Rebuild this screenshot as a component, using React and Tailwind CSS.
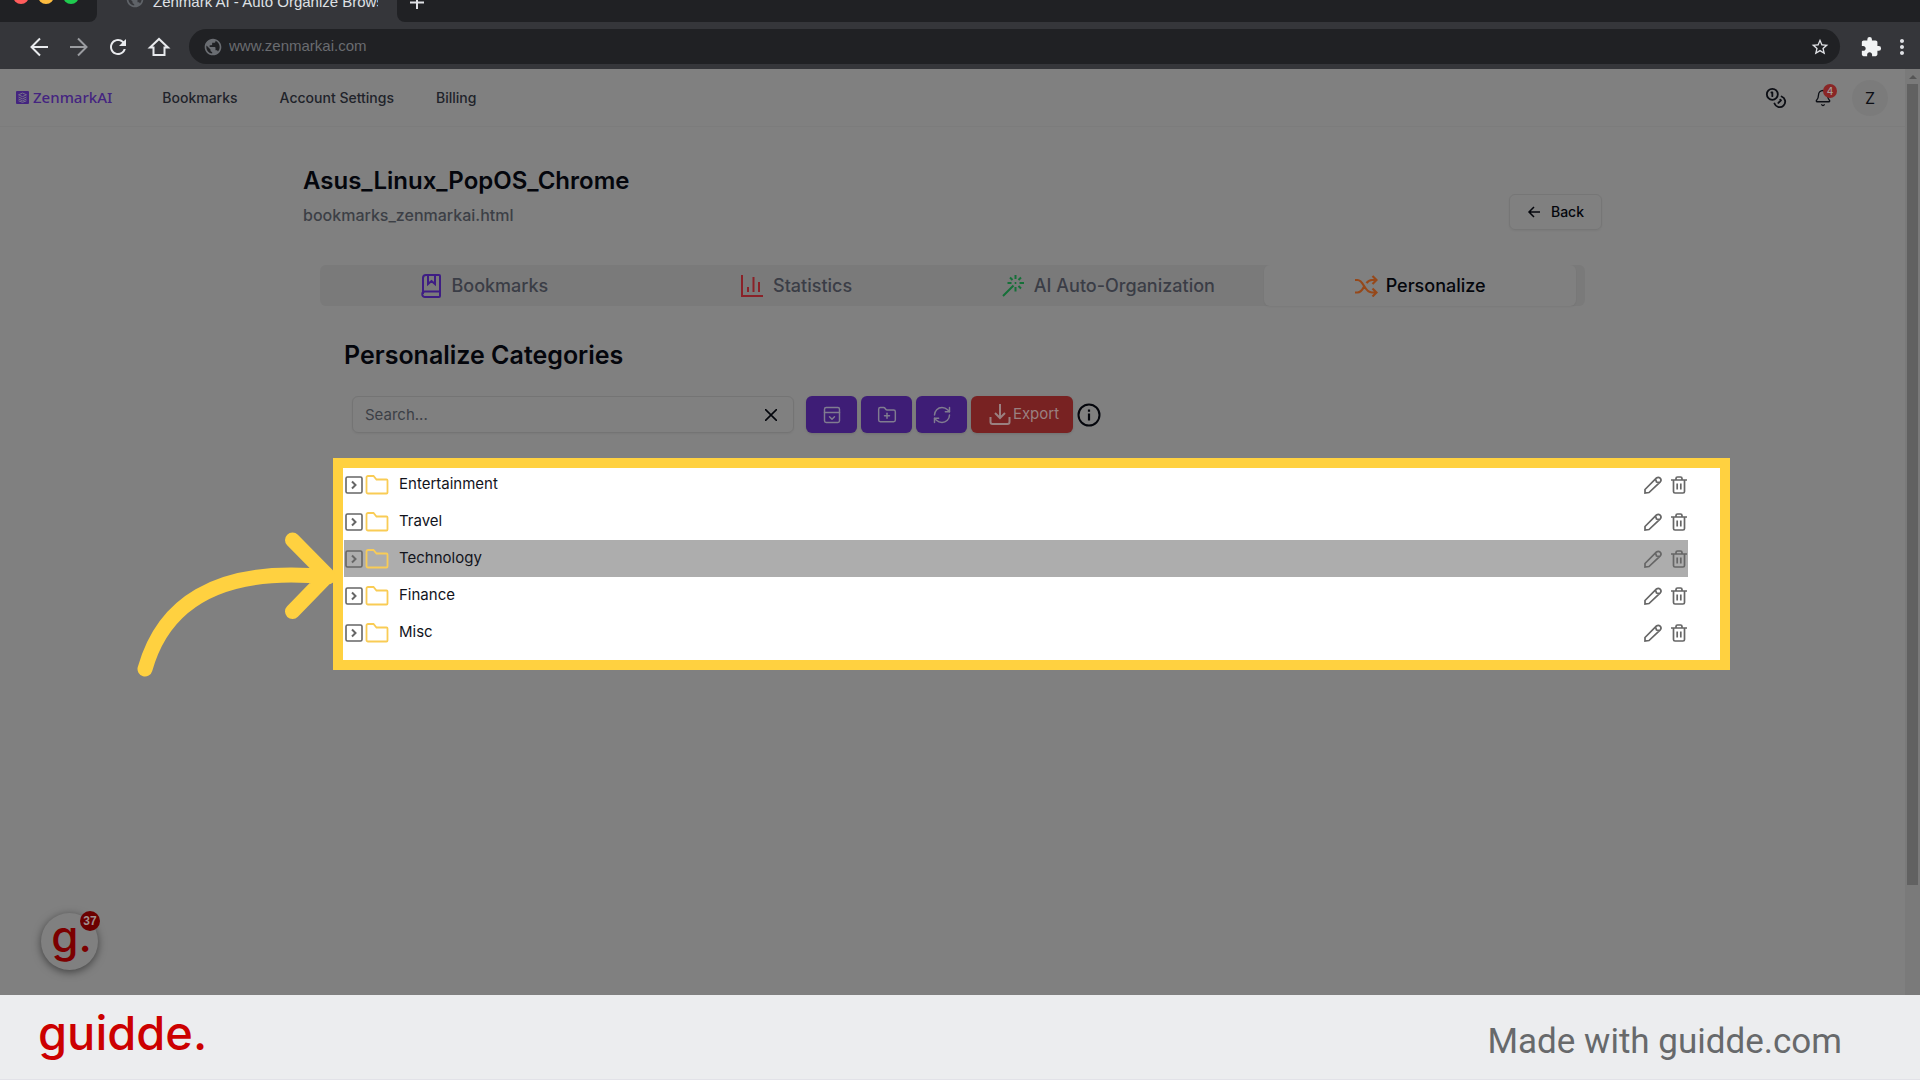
import { useState } from "react";
import {
  Bell,
  Coins,
  FolderPlus,
  PanelTopOpen,
  RefreshCw,
} from "lucide-react";
import {
  MdExtension,
  MdMoreVert,
  MdPublic,
  MdRefresh,
  MdStarOutline,
} from "react-icons/md";

const categories = ["Entertainment", "Travel", "Technology", "Finance", "Misc"];

function BookIcon() {
  return (
    <svg width="20" height="24" viewBox="0 0 20 24" fill="none" stroke="#3e1d84" strokeWidth="2">
      <path d="M2 20V4a3 3 0 0 1 3-3h13a1 1 0 0 1 1 1v20a1 1 0 0 1-1 1H4a2.500 2.500 0 0 1 0-5.500h15M7 1v9l3.500-3 3.500 3V1" />
    </svg>
  );
}

function ChartIcon() {
  return (
    <svg width="22" height="22" viewBox="0 0 22 22" fill="none" stroke="#8a2228" strokeWidth="2">
      <path d="M1 0v21H22M7 17v-5M12.500 17V2M18 17V7" />
    </svg>
  );
}

function WandIcon() {
  return (
    <svg width="22" height="22" viewBox="0 0 22 22" fill="none" stroke="#157038" strokeWidth="2">
      <path d="M1 21 11.500 10.500M13.500 0v4M13.500 12v4.500M5.500 8h4M17.500 8H22M8 2.500l2.500 2.500M19 2.500 16.500 5M16.500 11l2.500 2.500M12.700 8h1.600" />
    </svg>
  );
}

function ShuffleIcon() {
  return (
    <svg width="23" height="22" viewBox="0 0 23 22" fill="none" stroke="#96481a" strokeWidth="2.200">
      <path d="M0 5h2.500C9 5 9 17.500 17 17.500h4M0 17.500h2.500c4 0 5.500-4 7-6.800M11.500 8.200C13 6 14.500 5 17 5h4M17.500 1l4 4-4 4M17.500 13.500l4 4-4 4" />
    </svg>
  );
}

function DownloadIcon() {
  return (
    <svg width="22" height="22" viewBox="0 0 22 22" fill="none" stroke="currentColor" strokeWidth="2">
      <path d="M11 0v14M6 9l5 5 5-5M1.500 13v5a2 2 0 0 0 2 2h15a2 2 0 0 0 2-2V13" />
    </svg>
  );
}

function ExpandIcon() {
  return (
    <svg width="18" height="18" viewBox="0 0 18 18" fill="none" stroke="#666" strokeWidth="1.600">
      <rect x="1" y="1" width="16" height="16" rx="1.500" />
      <path d="m7 5.500 3.500 3.500L7 12.500" strokeWidth="2" />
    </svg>
  );
}

function FolderIcon() {
  return (
    <svg width="24" height="20" viewBox="0 0 24 20" fill="none" stroke="#f9cc55" strokeWidth="1.800">
      <path d="M1.500 17V2.500a1.500 1.500 0 0 1 1.500-1.500h5.500l3 3.500h10a1 1 0 0 1 1 1V17.500a1 1 0 0 1-1 1h-18.500a1.500 1.500 0 0 1-1.500-1.500z" />
    </svg>
  );
}

function PencilIcon() {
  return (
    <svg width="18" height="18" viewBox="0 0 18 18" fill="none" stroke="#666" strokeWidth="1.700">
      <path d="M1 17v-3.500L12.500 2a2.700 2.700 0 0 1 3.800 3.800L5 16.500zM11.500 3l1 3 3.200.5" />
    </svg>
  );
}

function TrashIcon() {
  return (
    <svg width="16" height="18" viewBox="0 0 16 18" fill="none" stroke="#666" strokeWidth="1.700">
      <path d="M0 4h16M2.500 4v11.500a1.500 1.500 0 0 0 1.500 1.500h8a1.500 1.500 0 0 0 1.500-1.500V4M5 4V2.500A1.500 1.500 0 0 1 6.500 1h3A1.500 1.500 0 0 1 11 2.500V4M6.200 7.500v6M9.800 7.500v6" />
    </svg>
  );
}

function BrowserBar() {
  return (
    <div className="bg-[#35363a] font-['Liberation_Sans']">
      {/* tab strip, scrolled half out of view */}
      <div className="flex h-[22px] overflow-hidden">
        <div className="flex w-[97px] items-start gap-[9px] rounded-br-lg bg-[#202124] pl-[13px]">
          <span className="-mt-3 size-4 rounded-full bg-[#ff5c5c]" />
          <span className="-mt-3 size-4 rounded-full bg-[#fdbc40]" />
          <span className="-mt-3 size-4 rounded-full bg-[#1fcb4f]" />
        </div>
        <div className="flex w-[300px] items-start gap-2 pl-7">
          <MdPublic className="-mt-[11px] size-5 shrink-0 text-[#5f6368]" />
          <span className="-mt-2 w-[225px] overflow-hidden text-[15px] leading-5 whitespace-nowrap text-[#dfe1e5]">
            Zenmark AI - Auto Organize Browser
          </span>
        </div>
        <div className="flex flex-1 items-start rounded-bl-lg bg-[#202124] pl-3">
          <svg className="-mt-1" width="16" height="16" viewBox="0 0 16 16" stroke="#dfe1e5" strokeWidth="2">
            <path d="M8 0v13M1 6.500h14" />
          </svg>
        </div>
      </div>
      <div className="flex h-[47px] items-center pt-0.5 pr-1.5 pl-[27px]">
        <button aria-label="Back">
          <svg width="24" height="24" viewBox="0 0 24 24" fill="none" stroke="#e8eaed" strokeWidth="2">
            <path d="M21 12H5M13 3.500 4.500 12l8.500 8.500" />
          </svg>
        </button>
        <button aria-label="Forward" className="ml-4">
          <svg width="24" height="24" viewBox="0 0 24 24" fill="none" stroke="#9a9ca0" strokeWidth="2">
            <path d="M3 12h16M11 3.500l8.500 8.500-8.500 8.500" />
          </svg>
        </button>
        <button aria-label="Reload" className="ml-[15px]"><MdRefresh className="size-6 text-[#e8eaed]" /></button>
        <button aria-label="Home" className="ml-[17px]">
          <svg width="24" height="24" viewBox="0 0 24 24" fill="none" stroke="#e8eaed" strokeWidth="2">
            <path d="M3 12.500h3.500V20h11v-7.500H21L12 4z" />
          </svg>
        </button>
        <div className="ml-[18px] flex h-[35px] flex-1 items-center rounded-full bg-[#202124] pr-2.5 pl-3.5">
          <MdPublic className="size-5 text-[#6a6d72]" />
          <input
            aria-label="Address"
            className="ml-1.5 flex-1 text-[15px] text-[#6a6c70] outline-none"
            defaultValue="www.zenmarkai.com"
          />
          <button aria-label="Bookmark this page"><MdStarOutline className="size-5 text-[#dfe1e5]" /></button>
        </div>
        <button aria-label="Extensions" className="ml-5"><MdExtension className="size-[22px] text-[#f1f3f4]" /></button>
        <button aria-label="Menu" className="ml-2"><MdMoreVert className="size-6 text-[#dfe1e5]" /></button>
      </div>
    </div>
  );
}

function Header() {
  return (
    <header className="flex h-[58px] items-center border-b border-[#7c7c7c] pr-[17px] pl-4 text-sm font-medium text-[#20232a]">
      <a href="#" className="flex items-center gap-1 pt-px font-['Noto_Sans'] text-[15px] font-medium text-[#442480]">
        <svg width="13" height="13" viewBox="0 0 13 13">
          <rect width="13" height="13" rx="1" fill="#442480" />
          <path d="m6.500 2 4 1.800-4 1.800-4-1.800zM2.500 6l4 1.800 4-1.800M2.500 8l4 1.800 4-1.800M2.500 9.800l4 1.500 4-1.500" fill="none" stroke="#77728a" />
        </svg>
        ZenmarkAI
      </a>
      <nav className="ml-[50px] flex gap-[42px] pt-px">
        <a href="#">Bookmarks</a>
        <a href="#">Account Settings</a>
        <a href="#">Billing</a>
      </nav>
      <div className="ml-auto flex items-center">
        <button aria-label="Credits"><Coins className="size-[22px] text-[#0c0e14]" /></button>
        <button aria-label="Notifications" className="relative ml-[27px]">
          <Bell className="size-[18px] text-[#0c0e14]" strokeWidth={1.75} />
          <span className="absolute -top-[5px] left-[9px] size-3.5 rounded-full bg-[#8a2626] text-center text-[10px] leading-3.5 text-[#a59a9a]">
            4
          </span>
        </button>
        <button className="ml-5 size-9 rounded-full bg-[#7b7b7b] text-base font-normal text-[#0c0e14]">Z</button>
      </div>
    </header>
  );
}

const tabs = [
  { name: "Bookmarks", icon: BookIcon },
  { name: "Statistics", icon: ChartIcon },
  { name: "AI Auto-Organization", icon: WandIcon },
  { name: "Personalize", icon: ShuffleIcon },
];

function Tabs() {
  const [active, setActive] = useState("Personalize");

  return (
    <div role="tablist" className="mx-[17px] mt-[35px] grid h-[41px] grid-cols-4 rounded-md bg-[#7a7a7a] px-[9px] text-lg font-medium">
      {tabs.map(({ name, icon: Icon }) => (
        <button
          key={name}
          role="tab"
          aria-selected={active === name}
          onClick={() => setActive(name)}
          className={
            active === name
              ? "flex items-center justify-center gap-2 rounded-md bg-[#808080] text-[#04060c] shadow-xs"
              : "flex items-center justify-center gap-2.5 rounded-md text-[#3a3d46]"
          }
        >
          <Icon />
          {name}
        </button>
      ))}
    </div>
  );
}

function Toolbar() {
  const [search, setSearch] = useState("");

  return (
    <div className="mt-[26px] ml-[49px] flex items-center">
      <div className="flex h-[37px] w-[442px] items-center rounded-md border border-[#747474] pr-4 pl-3 shadow-xs">
        <input
          aria-label="Search"
          className="flex-1 pt-px text-[15px] outline-none placeholder:text-[#3c3f46]"
          placeholder="Search..."
          value={search}
          onChange={(e) => setSearch(e.target.value)}
        />
        <button aria-label="Clear" onClick={() => setSearch("")}>
          <svg width="12" height="12" viewBox="0 0 12 12" stroke="#04060c" strokeWidth="1.600">
            <path d="m0 0 12 12M12 0 0 12" />
          </svg>
        </button>
      </div>
      <div className="ml-3 flex items-center gap-1 text-[#807c90]">
        <button aria-label="Collapse all" className="flex h-[37px] w-[51px] items-center justify-center rounded-md bg-[#3e1d76] shadow-sm">
          <PanelTopOpen className="size-5" strokeWidth={1.75} />
        </button>
        <button aria-label="New folder" className="flex h-[37px] w-[51px] items-center justify-center rounded-md bg-[#3e1d76] shadow-sm">
          <FolderPlus className="size-5" strokeWidth={1.75} />
        </button>
        <button aria-label="Refresh" className="flex h-[37px] w-[51px] items-center justify-center rounded-md bg-[#3e1d76] shadow-sm">
          <RefreshCw className="size-5" strokeWidth={1.75} />
        </button>
        <button className="flex h-[37px] w-[102px] items-center justify-center gap-0.5 rounded-md bg-[#782222] pl-1 text-[15px] text-[#9a8080] shadow-sm">
          <DownloadIcon />
          Export
        </button>
        <button aria-label="Info">
          <svg width="24" height="24" viewBox="0 0 24 24" fill="none" stroke="#04060c" strokeWidth="2">
            <circle cx="12" cy="12" r="10.500" />
            <path d="M12 10.500v7M12 6.500v2.200" strokeWidth="2.200" />
          </svg>
        </button>
      </div>
    </div>
  );
}

function CategoryList() {
  return (
    <div className="relative mt-[25px] -mr-[128px] ml-[30px] bg-white pt-2 pr-[42px] pb-[19px] pl-[11px]">
      <ul className="text-[15px] text-[#12141c]">
        {categories.map((name) => (
          <li
            key={name}
            className={
              name === "Technology"
                ? "flex h-[37px] items-center bg-[#adadad] pr-px pl-px"
                : "flex h-[37px] items-center pr-px pl-px"
            }
          >
            <button aria-label={"Expand " + name}><ExpandIcon /></button>
            <span className="ml-0.5"><FolderIcon /></span>
            <span className="ml-2.5 flex-1">{name}</span>
            <button aria-label={"Edit " + name}><PencilIcon /></button>
            <button aria-label={"Delete " + name} className="ml-[9px]"><TrashIcon /></button>
          </li>
        ))}
      </ul>
      <div className="pointer-events-none absolute inset-0 border-[10px] border-[#ffd140]" />
      <svg
        className="pointer-events-none absolute top-[67px] -left-[203px]"
        width="205"
        height="160"
        viewBox="130 525 205 160"
        fill="none"
        stroke="#ffd140"
        strokeWidth="15"
        strokeLinecap="round"
        strokeLinejoin="round"
      >
        <path d="M145 669C162 608 212 565 328 577M292.500 540l35 35.500-35 36" />
      </svg>
    </div>
  );
}

export default function App() {
  return (
    <div className="flex min-h-screen flex-col bg-[#808080] font-[Inter,sans-serif]">
      <BrowserBar />
      <div className="flex flex-1">
        <div className="relative min-w-0 flex-1">
          <Header />
          <main className="mx-auto max-w-[1299px] pt-[38px]">
            <div className="flex items-end justify-between">
              <div className="pb-[3px]">
                <h1 className="text-2xl font-semibold text-[#04060c]">Asus_Linux_PopOS_Chrome</h1>
                <p className="mt-1.5 text-base font-medium text-[#3c3f46]">bookmarks_zenmarkai.html</p>
              </div>
              <button className="flex h-9 items-center gap-2.5 rounded-md border border-[#767676] px-[17px] text-sm font-medium text-[#04060c] shadow-xs">
                <svg width="14" height="12" viewBox="0 0 14 12" fill="none" stroke="currentColor" strokeWidth="1.500">
                  <path d="M13 6H2M7 1 2 6l5 5" />
                </svg>
                Back
              </button>
            </div>
            <Tabs />
            <h2 className="mt-8 ml-[41px] text-[25px] leading-[34px] font-semibold text-[#04060c]">Personalize Categories</h2>
            <div className="-mt-0.5">
              <Toolbar />
            </div>
            <CategoryList />
          </main>
          <button className="absolute bottom-[25px] left-[41px] size-[57px] rounded-full bg-[#808080] shadow-[0_2px_8px_rgba(0,0,0,0.5)]">
            <span className="block pb-3 pl-1 text-[44px] leading-[44px] font-medium text-[#7c0000]">g.</span>
            <span className="absolute -top-0.5 -right-0.5 size-5 rounded-full bg-[#6c0000] font-['Liberation_Sans'] text-xs leading-5 font-bold text-[#a09090]">
              37
            </span>
          </button>
        </div>
        <div className="flex w-[15px] flex-col items-center bg-[#7a7a7a] pt-[6px] pb-[110px]">
          <svg width="8" height="4" viewBox="0 0 8 4" fill="#555">
            <path d="M0 4 4 0l4 4z" />
          </svg>
          <div className="mt-[5px] w-[11px] flex-1 bg-[#616161]" />
        </div>
      </div>
      <footer className="flex h-[85px] items-center justify-between border-b border-[#e2e2e8] bg-[#ecedef] pr-[78px] pl-[38px]">
        <a href="#" className="pb-2.5 text-[47px] leading-none font-medium text-[#cc0000]">guidde.</a>
        <p className="pt-2.5 font-[Roboto,sans-serif] text-[35px] text-[#67696b]">Made with guidde.com</p>
      </footer>
    </div>
  );
}
